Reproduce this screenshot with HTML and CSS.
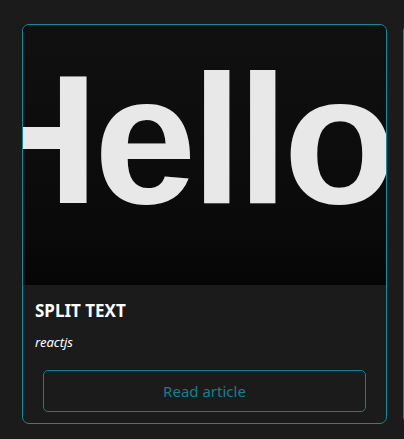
FILE: index.html
```
<!DOCTYPE html>
<html>
<head>
<meta charset="utf-8">
<link rel="stylesheet" href="styles.css">
</head>
<body>
<div class="row">
  <article class="card">
    <div class="thumb"><span class="hello">Hello</span></div>
    <div class="body">
      <h2 class="title">SPLIT TEXT</h2>
      <p class="tag">reactjs</p>
      <a class="btn">Read article</a>
    </div>
  </article>
  <article class="card">
    <div class="thumb"></div>
  </article>
</div>
</body>
</html>
```
FILE: styles.css
```
html, body {
  margin: 0;
  padding: 0;
  background: #1b1b1b;
  overflow: hidden;
  width: 404px;
  height: 439px;
}
.row {
  display: flex;
  gap: 16px;
  padding: 24px 0 0 22px;
}
.card {
  flex: 0 0 365px;
  height: 400px;
  box-sizing: border-box;
  border: 1px solid #0b8d9c;
  border-radius: 7px;
  background: #1b1b1b;
  overflow: hidden;
  display: flex;
  flex-direction: column;
}
.thumb {
  height: 260px;
  flex: 0 0 260px;
  background: linear-gradient(#101010, #0a0a0a 80%, #050505);
  overflow: hidden;
  display: flex;
  align-items: flex-start;
  padding-top: 22px;
  box-sizing: border-box;
}
.hello {
  font-family: "Liberation Sans", Arial, sans-serif;
  font-weight: 700;
  font-size: 184px;
  line-height: 184px;
  letter-spacing: -5px;
  color: #e8e8e8;
  margin-left: -57px;
  white-space: nowrap;
  filter: blur(0.6px);
}
.body {
  padding: 15px 12px 11px 12px;
  display: flex;
  flex-direction: column;
  flex: 1;
}
.title {
  margin: 0;
  font-family: "Noto Sans", "Open Sans", sans-serif;
  font-weight: 700;
  font-size: 17px;
  line-height: 22px;
  color: #ffffff;
}
.tag {
  margin: 10px 0 0 0;
  font-family: "Noto Sans", "Open Sans", sans-serif;
  font-style: italic;
  font-size: 13px;
  line-height: 20px;
  color: #ffffff;
}
.btn {
  margin: auto 8px 0 8px;
  height: 42px;
  box-sizing: border-box;
  border: 1px solid #0b8393;
  border-radius: 5px;
  display: flex;
  align-items: center;
  justify-content: center;
  font-family: "Noto Sans", "Open Sans", sans-serif;
  font-size: 15px;
  color: #137f8e;
}
```
